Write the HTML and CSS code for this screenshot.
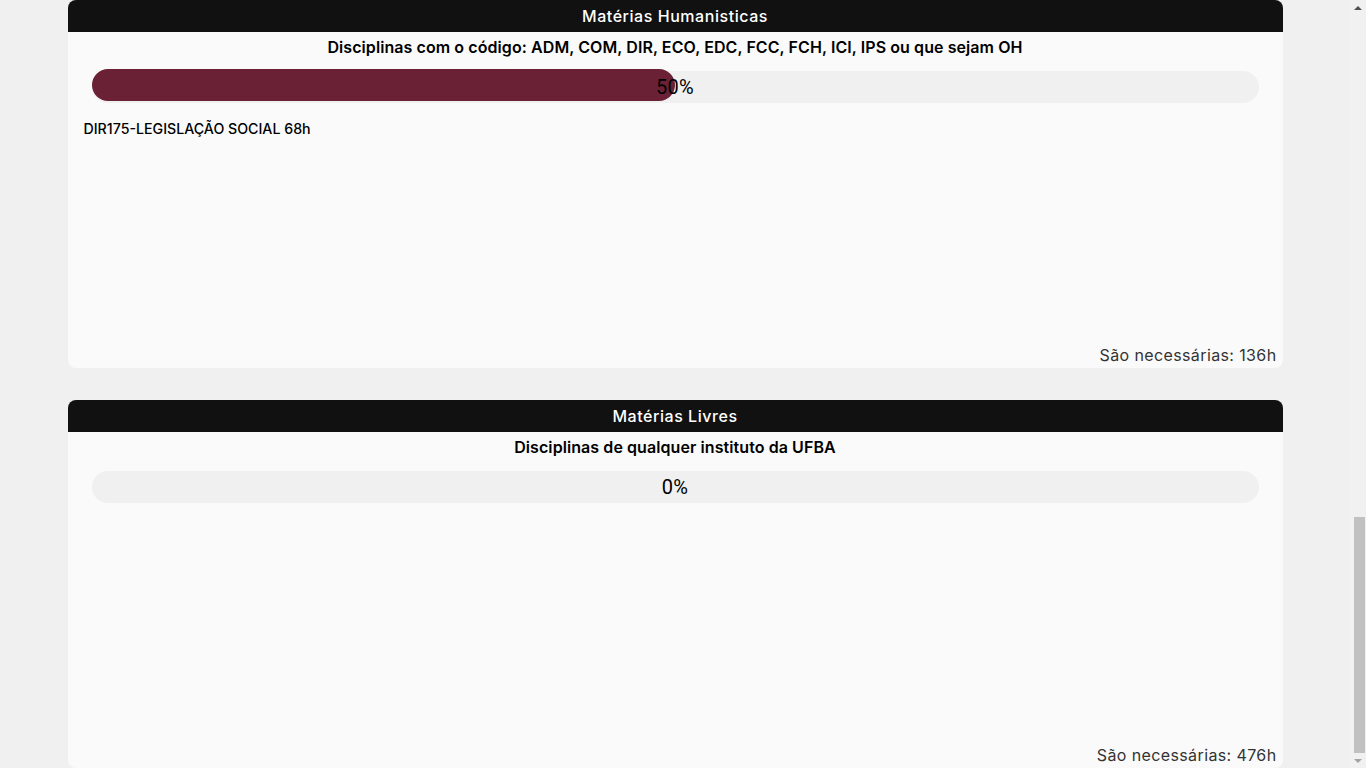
FILE: index.html
```html
<!DOCTYPE html>
<html lang="pt-BR">
<head>
<meta charset="utf-8">
<title>Matérias</title>
<link rel="stylesheet" href="styles.css">
</head>
<body>
<div class="window">
  <main class="page">
    <section class="card">
      <header class="card-head">Matérias Humanisticas</header>
      <h2 class="card-sub">Disciplinas com o código: ADM, COM, DIR, ECO, EDC, FCC, FCH, ICI, IPS ou que sejam OH</h2>
      <div class="progress">
        <div class="progress-fill" style="width:50%"></div>
        <span class="progress-label">50%</span>
      </div>
      <ul class="courses">
        <li class="course">DIR175-LEGISLAÇÃO SOCIAL 68h</li>
      </ul>
      <p class="card-foot">São necessárias: 136h</p>
    </section>
    <section class="card">
      <header class="card-head">Matérias Livres</header>
      <h2 class="card-sub">Disciplinas de qualquer instituto da UFBA</h2>
      <div class="progress progress-empty">
        <span class="progress-label">0%</span>
      </div>
      <ul class="courses"></ul>
      <p class="card-foot">São necessárias: 476h</p>
    </section>
  </main>
  <div class="scrollbar">
    <div class="sb-arrow sb-up"></div>
    <div class="sb-track"><div class="sb-thumb"></div></div>
    <div class="sb-arrow sb-down"></div>
  </div>
</div>
</body>
</html>
```

FILE: styles.css
```css
* { box-sizing: border-box; }
html, body { margin: 0; padding: 0; height: 100%; overflow: hidden; }
body {
  background: #f0f0f0;
  font-family: Inter, "Noto Sans", sans-serif;
  color: #000;
}
.window {
  display: flex;
  height: 768px;
}
.page {
  flex: 1;
  display: flex;
  flex-direction: column;
  align-items: center;
  gap: 32px;
}
.card {
  width: 90%;
  height: 368px;
  background: #fafafa;
  border-radius: 8px;
  display: flex;
  flex-direction: column;
}
.card-head {
  height: 32px;
  background: #111111;
  color: #ffffff;
  border-radius: 8px 8px 0 0;
  display: flex;
  align-items: center;
  justify-content: center;
  font-size: 16px;
  font-weight: 500;
  letter-spacing: 0.55px;
}
.card-sub {
  margin: 3px 0 0;
  height: 24px;
  line-height: 24px;
  text-align: center;
  font-size: 16px;
  font-weight: 600;
  letter-spacing: 0.08px;
}
.progress {
  position: relative;
  margin: 12px 24px 0;
  height: 32px;
  background: #f0f0f0;
  border-radius: 16px;
  display: flex;
  align-items: center;
}
.progress-fill {
  position: absolute;
  left: 0;
  top: -2px;
  height: 32px;
  background: #6b2135;
  border-radius: 16px;
}
.progress-label {
  position: relative;
  width: 100%;
  text-align: center;
  font-family: Roboto, "Liberation Sans", sans-serif;
  font-size: 20px;
  letter-spacing: 0.3px;
  color: #000;
}
.courses {
  list-style: none;
  margin: 16px 0 0;
  padding: 0 16px;
  flex: 1;
}
.course {
  font-size: 14.2px;
  font-weight: 500;
  line-height: 20px;
}
.card-foot {
  margin: 0;
  padding: 0 6px 1px 0;
  text-align: right;
  font-size: 16px;
  letter-spacing: 0.38px;
  line-height: 24px;
  color: #333;
}
.scrollbar {
  width: 16px;
  background: #f1f1f1;
  display: flex;
  flex-direction: column;
  align-items: center;
}
.sb-arrow {
  height: 15px;
  width: 16px;
  display: flex;
  align-items: center;
  justify-content: center;
}
.sb-up::before {
  content: "";
  border-left: 4px solid transparent;
  border-right: 4px solid transparent;
  border-bottom: 4px solid #505050;
}
.sb-down::before {
  content: "";
  border-left: 4px solid transparent;
  border-right: 4px solid transparent;
  border-top: 4px solid #a3a3a3;
}
.sb-track {
  flex: 1;
  width: 16px;
  display: flex;
  flex-direction: column;
  justify-content: flex-end;
  align-items: center;
}
.sb-thumb {
  width: 11px;
  height: 236px;
  margin-left: 2px;
  background: #c1c1c1;
}
```
